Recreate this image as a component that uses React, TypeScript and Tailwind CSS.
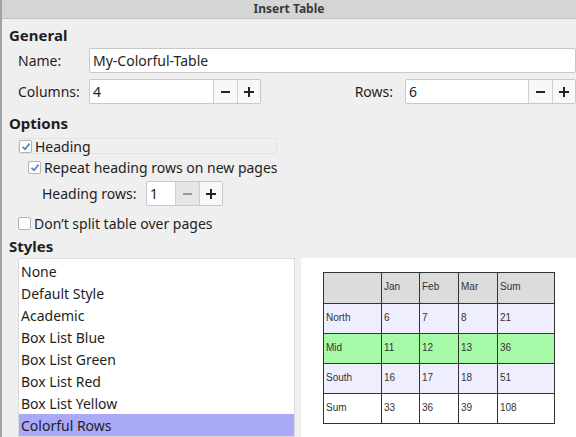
import React from 'react';

const styles = [
  "None",
  "Default Style",
  "Academic",
  "Box List Blue",
  "Box List Green",
  "Box List Red",
  "Box List Yellow",
  "Colorful Rows",
];

const previewRows = [
  { cells: ["", "Jan", "Feb", "Mar", "Sum"], bg: "bg-[#dcdcdc]" },
  { cells: ["North", "6", "7", "8", "21"], bg: "bg-[#eeeeff]" },
  { cells: ["Mid", "11", "12", "13", "36"], bg: "bg-[#a6f9a6]" },
  { cells: ["South", "16", "17", "18", "51"], bg: "bg-[#eeeeff]" },
  { cells: ["Sum", "33", "36", "39", "108"], bg: "bg-white" },
];

const colWidths = ["w-[57px]", "w-[38px]", "w-[39px]", "w-[39px]", "w-[57px]"];

function Check({ checked }: { checked: boolean }) {
  return (
    <span className="w-[13px] h-[13px] bg-white border border-[#b4b4b4] rounded-[2px] flex items-center justify-center shrink-0">
      {checked && (
        <svg width="10" height="9" viewBox="0 0 10 9">
          <path d="M1.5 4.8 L4 7.2 L8.6 1.6" fill="none" stroke="#5a86c0" strokeWidth="1.8" />
        </svg>
      )}
    </span>
  );
}

function SpinField({ value, width, minusDisabled }: { value: string; width: string; minusDisabled?: boolean }) {
  return (
    <div className="flex h-[25px] border border-[#c8c8c8] rounded-[2px] bg-white">
      <div className={`${width} px-[3px] flex items-center text-[#222]`}>{value}</div>
      <div className={`w-[24px] border-l border-[#d0d0d0] flex items-center justify-center ${minusDisabled ? "bg-[#e6e6e6] text-[#999]" : "bg-[#f8f8f8] text-[#222]"}`}>
        <span className="block w-[9px] h-[2px] bg-current"></span>
      </div>
      <div className="w-[23px] border-l border-[#d0d0d0] flex items-center justify-center bg-[#f8f8f8] text-[#222]">
        <span className="relative block w-[10px] h-[10px]">
          <span className="absolute left-0 top-[4px] w-[10px] h-[2px] bg-current"></span>
          <span className="absolute top-0 left-[4px] w-[2px] h-[10px] bg-current"></span>
        </span>
      </div>
    </div>
  );
}

export default function App() {
  return (
    <div className="w-[576px] h-[437px] overflow-hidden bg-[#efefef] flex flex-col border-l-2 border-[#a3a3a3] text-[14px] text-[#1e1e1e]" style={{ fontFamily: '"Noto Sans", "Open Sans", sans-serif' }}>
      {/* title bar */}
      <div className="h-[19px] shrink-0 bg-[#d5d5d5] border-b border-[#c2c2c2] flex items-center justify-center text-[12px] font-bold text-[#3a3a3a]">
        Insert Table
      </div>

      <div className="flex flex-col pl-[7px]">
        <div className="h-[25px] mt-[4px] flex items-center font-bold text-[15px]">General</div>

        <div className="flex items-center h-[25px] mt-[0px]">
          <div className="w-[80px] pl-[9px]">Name:</div>
          <div className="flex-1 h-[25px] bg-white border border-[#c8c8c8] rounded-[2px] px-[3px] flex items-center">My-Colorful-Table</div>
        </div>

        <div className="flex items-center h-[25px] mt-[6px]">
          <div className="w-[80px] pl-[9px]">Columns:</div>
          <SpinField value="4" width="w-[123px]" />
          <div className="flex-1 text-right pr-[12px]">Rows:</div>
          <SpinField value="6" width="w-[122px]" />
        </div>

        <div className="h-[20px] mt-[9px] flex items-center font-bold text-[15px]">Options</div>

        <div className="flex items-center h-[16px] mt-[5px] ml-[9px] w-[259px] border border-[#e2e2e2] rounded-[2px] gap-[3px]">
          <Check checked />
          <span>Heading</span>
        </div>

        <div className="flex items-center h-[16px] mt-[5px] ml-[19px] gap-[3px]">
          <Check checked />
          <span>Repeat heading rows on new pages</span>
        </div>

        <div className="flex items-center h-[25px] mt-[6px] ml-[33px]">
          <span className="w-[104px]">Heading rows:</span>
          <SpinField value="1" width="w-[28px]" minusDisabled />
        </div>

        <div className="flex items-center h-[16px] mt-[9px] ml-[9px] gap-[3px]">
          <Check checked={false} />
          <span>Don’t split table over pages</span>
        </div>

        <div className="h-[20px] mt-[5px] flex items-center font-bold text-[15px]">Styles</div>
      </div>

      <div className="flex mt-[2px] flex-1 pl-[16px]">
        <div className="w-[277px] bg-white border border-[#dadada] flex flex-col pt-[1px]">
          {styles.map((s) => (
            <div key={s} className={`h-[22px] flex items-center pl-[2px] ${s === "Colorful Rows" ? "bg-[#a9a9f8]" : ""}`}>
              {s}
            </div>
          ))}
        </div>
        <div className="w-[6px]"></div>
        <div className="flex-1 bg-white pt-[14px] pl-[22px]">
          <div className="flex flex-col w-fit border border-[#333]" style={{ fontFamily: '"Liberation Sans", Arial, sans-serif' }}>
            {previewRows.map((r, i) => (
              <div key={i} className={`flex h-[30px] ${r.bg} ${i > 0 ? "border-t border-[#333]" : ""}`}>
                {r.cells.map((c, j) => (
                  <div key={j} className={`${colWidths[j]} ${j > 0 ? "border-l border-[#333]" : ""} text-[10px] text-[#333] pl-[2px] pb-[3px] flex items-center`}>
                    {c}
                  </div>
                ))}
              </div>
            ))}
          </div>
        </div>
      </div>
    </div>
  );
}
